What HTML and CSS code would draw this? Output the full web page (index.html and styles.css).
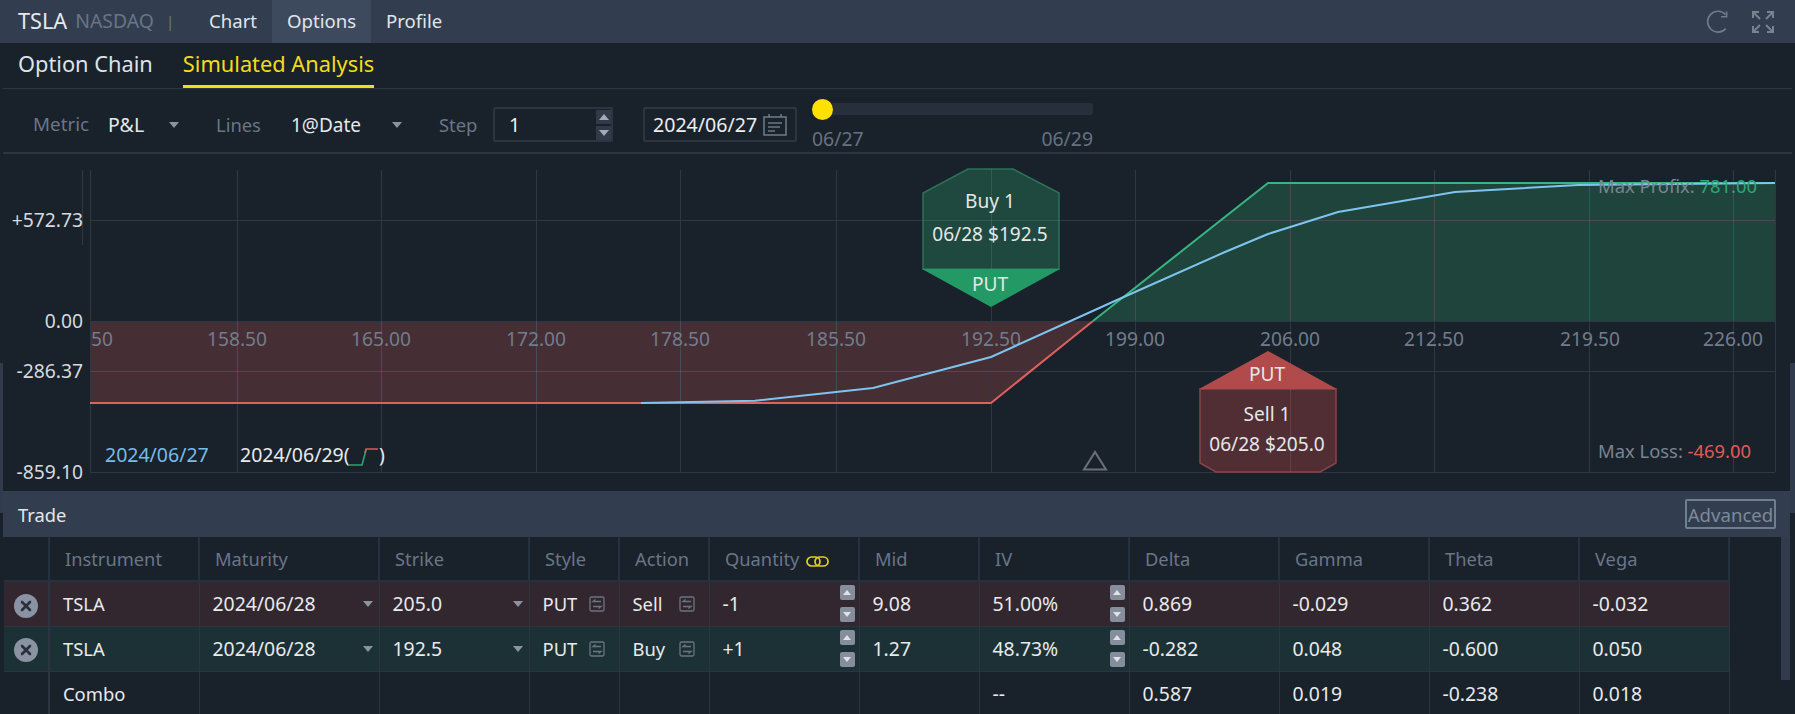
FILE: index.html
```html
<!DOCTYPE html>
<html lang="en">
<head>
<meta charset="utf-8">
<title>TSLA Options</title>
<link rel="stylesheet" href="styles.css">
</head>
<body>
<div class="page">
  <span class="edge edge-left"></span>
  <span class="edge edge-right"></span>

  <header class="topbar">
    <div class="brand"><span class="ticker">TSLA</span><span class="exchange">NASDAQ</span><span class="divider">|</span></div>
    <nav class="nav">
      <a class="nav-item">Chart</a>
      <a class="nav-item is-active">Options</a>
      <a class="nav-item">Profile</a>
    </nav>
    <div class="top-icons">
      <svg class="ico-refresh" width="24" height="24" viewBox="0 0 24 24"><path d="M20.6 4.6A10.4 10.4 0 1 0 20.8 18.6" fill="none" stroke="#6f7b8b" stroke-width="1.6"/><path d="M21.6 1.5V6.8H16" fill="none" stroke="#6f7b8b" stroke-width="1.6"/></svg>
      <svg class="ico-expand" width="24" height="24" viewBox="0 0 24 24" fill="none" stroke="#77838f" stroke-width="2"><path d="M2 8V2H8M2 2L9 9"/><path d="M16 2H22V8M22 2L15 9"/><path d="M2 16V22H8M2 22L9 15"/><path d="M16 22H22V16M22 22L15 15"/></svg>
    </div>
  </header>

  <div class="subtabs">
    <a class="subtab">Option Chain</a>
    <a class="subtab is-active">Simulated Analysis</a>
  </div>

  <div class="toolbar">
    <span class="lbl lbl-metric">Metric</span>
    <div class="sel sel-metric"><span>P&amp;L</span><i class="caret"></i></div>
    <span class="lbl lbl-lines">Lines</span>
    <div class="sel sel-lines"><span>1@Date</span><i class="caret"></i></div>
    <span class="lbl lbl-step">Step</span>
    <div class="box box-step"><span>1</span>
      <div class="step-spin"><i class="spin-up"></i><i class="spin-down"></i></div>
    </div>
    <div class="box box-date"><span>2024/06/27</span>
      <svg width="24" height="22" viewBox="0 0 24 22" fill="none" stroke="#6c7685" stroke-width="1.6"><rect x="1" y="3" width="22" height="18"/><path d="M6 0V3M18 0V3M5 9H19M5 13H17M5 17H12"/></svg>
    </div>
    <div class="slider">
      <div class="track"><span class="thumb"></span></div>
      <div class="slider-labels"><span>06/27</span><span>06/29</span></div>
    </div>
  </div>

  <section class="chart">
    <svg class="plot" width="1795" height="337" viewBox="0 154 1795 337">
      <!-- areas -->
      <polygon points="90,321 1093,321 991,403 90,403" fill="#452e34"/>
      <polygon points="1093,321 1268,183 1775,183 1775,321" fill="#1f443b"/>
      <!-- grid -->
      <g stroke="#2e3845" stroke-width="1" class="grid">
        <path d="M82.5 170V245M90.5 170V472M237.5 170V472M381.5 170V472M536.5 170V472M680.5 170V472M836.5 170V472M991.5 170V472M1135.5 170V472M1290.5 170V472M1434.5 170V472M1589.5 170V472M1733.5 170V472M1775.5 170V472"/>
        <path d="M90 220.5H1775M90 321.5H1775M90 371.5H1775M90 472.5H1775"/>
      </g>
      <g stroke="#ffffff" stroke-opacity=".1">
        <path d="M237.5 321V403M381.5 321V403M536.5 321V403M680.5 321V403M836.5 321V403M1290.5 183V321M1434.5 183V321M1589.5 183V321M1733.5 183V321M1135.5 288V321M1221 220.5H1775M90 371.5H1031"/>
      </g>
      <!-- y axis -->
      <g class="axis-y" text-anchor="end">
        <text x="83" y="227">+572.73</text>
        <text x="83" y="328">0.00</text>
        <text x="83" y="378">-286.37</text>
        <text x="83" y="479">-859.10</text>
      </g>
      <!-- x axis -->
      <g class="axis-x" text-anchor="middle">
        <text x="91" y="346" class="clip-left">50</text>
        <text x="237" y="346">158.50</text>
        <text x="381" y="346">165.00</text>
        <text x="536" y="346">172.00</text>
        <text x="680" y="346">178.50</text>
        <text x="836" y="346">185.50</text>
        <text x="991" y="346">192.50</text>
        <text x="1135" y="346">199.00</text>
        <text x="1290" y="346">206.00</text>
        <text x="1434" y="346">212.50</text>
        <text x="1590" y="346">219.50</text>
        <text x="1733" y="346">226.00</text>
      </g>
      <!-- payoff -->
      <path d="M90 403H991L1093 321" fill="none" stroke="#e0605f" stroke-width="2"/>
      <path d="M1093 321L1268 183H1775" fill="none" stroke="#35b57f" stroke-width="2"/>
      <path d="M641 403L755 400.7L873 388L991 357L1117 300L1225 252L1268 234L1338 212L1455 192L1578 185L1775 183" fill="none" stroke="#7fc4ee" stroke-width="2"/>
      <!-- buy badge -->
      <polygon points="968,169 1013,169 1059,193 1059,269 923,269 923,193" fill="#1f4b40" fill-opacity=".96" stroke="#2b7259" stroke-width="1.5"/>
      <path d="M991.5 169V269M923 220.5H1059" stroke="#ffffff" stroke-opacity=".09"/>
      <polygon points="922,269 1060,269 991,307" fill="#239966"/>
      <g class="badge" text-anchor="middle">
        <text x="990" y="208">Buy 1</text>
        <text x="990" y="241">06/28 $192.5</text>
        <text x="990" y="291">PUT</text>
      </g>
      <!-- sell badge -->
      <polygon points="1200,389 1336,389 1336,463 1320,472 1216,472 1200,463" fill="#502e34" stroke="#8a4448" stroke-width="1.5"/>
      <path d="M1290.5 389V472" stroke="#ffffff" stroke-opacity=".09"/>
      <polygon points="1199,389 1337,389 1268,351" fill="#b14b4b"/>
      <g class="badge" text-anchor="middle">
        <text x="1267" y="381">PUT</text>
        <text x="1267" y="421">Sell 1</text>
        <text x="1267" y="451">06/28 $205.0</text>
      </g>
      <!-- price marker -->
      <polygon points="1095,452 1084,469.5 1106,469.5" fill="none" stroke="#6a7079" stroke-width="2"/>
      <!-- legend -->
      <g class="legend">
        <text x="105" y="462" class="lg-blue">2024/06/27</text>
        <text x="240" y="462">2024/06/29(</text>
        <path d="M349 465H362L366 450" fill="none" stroke="#2aa56f" stroke-width="1.6"/>
        <path d="M365 453L366 449H378" fill="none" stroke="#d9585a" stroke-width="1.6"/>
        <text x="379" y="462">)</text>
      </g>
      <!-- extremes -->
      <text class="extreme" x="1598" y="193">Max Profix: <tspan class="ex-green">781.00</tspan></text>
      <text class="extreme" x="1598" y="458">Max Loss: <tspan class="ex-red">-469.00</tspan></text>
    </svg>
  </section>

  <section class="trade">
    <div class="trade-head">
      <span class="trade-title">Trade</span>
      <button class="advanced">Advanced</button>
    </div>
    <div class="trade-body">
      <table class="legs">
        <colgroup>
          <col class="c-x"><col class="c-150"><col class="c-180"><col class="c-150"><col class="c-90"><col class="c-90"><col class="c-150"><col class="c-120"><col class="c-150"><col class="c-150"><col class="c-150"><col class="c-150"><col class="c-150">
        </colgroup>
        <thead>
          <tr><th></th><th>Instrument</th><th>Maturity</th><th>Strike</th><th>Style</th><th>Action</th>
            <th>Quantity<svg class="chain-ico" width="23" height="11" viewBox="0 0 23 11" fill="none" stroke="#e6cf1e" stroke-width="1.7"><rect x="1" y="1" width="13" height="9" rx="4.5"/><rect x="9" y="1" width="13" height="9" rx="4.5"/></svg></th>
            <th>Mid</th><th>IV</th><th>Delta</th><th>Gamma</th><th>Theta</th><th>Vega</th></tr>
        </thead>
        <tbody>
          <tr class="row-sell">
            <td class="c-close"><span class="close-btn"><svg width="12" height="12" viewBox="0 0 12 12"><path d="M2 2L10 10M10 2L2 10" stroke="#2a303a" stroke-width="2.6" stroke-linecap="round"/></svg></span></td>
            <td class="txt">TSLA</td>
            <td><div class="cell-flex"><span>2024/06/28</span><i class="caret"></i></div></td>
            <td><div class="cell-flex"><span>205.0</span><i class="caret"></i></div></td>
            <td class="txt"><div class="cell-toggle"><span>PUT</span><svg class="swap" width="16" height="16" viewBox="0 0 16 16" fill="none" stroke="#6b7480" stroke-width="1.3"><rect x="1" y="1" width="14" height="14" rx="1.5"/><path d="M12 5.5H4L6.5 3.5M4 10.5H12L9.5 12.5"/></svg></div></td>
            <td class="txt"><div class="cell-toggle"><span>Sell</span><svg class="swap" width="16" height="16" viewBox="0 0 16 16" fill="none" stroke="#6b7480" stroke-width="1.3"><rect x="1" y="1" width="14" height="14" rx="1.5"/><path d="M12 5.5H4L6.5 3.5M4 10.5H12L9.5 12.5"/></svg></div></td>
            <td><div class="cell-spin"><span>-1</span><div class="spin"><i class="s-up"></i><i class="s-down"></i></div></div></td>
            <td>9.08</td>
            <td><div class="cell-spin"><span>51.00%</span><div class="spin"><i class="s-up"></i><i class="s-down"></i></div></div></td>
            <td>0.869</td><td>-0.029</td><td>0.362</td><td>-0.032</td>
          </tr>
          <tr class="row-buy">
            <td class="c-close"><span class="close-btn"><svg width="12" height="12" viewBox="0 0 12 12"><path d="M2 2L10 10M10 2L2 10" stroke="#2a303a" stroke-width="2.6" stroke-linecap="round"/></svg></span></td>
            <td class="txt">TSLA</td>
            <td><div class="cell-flex"><span>2024/06/28</span><i class="caret"></i></div></td>
            <td><div class="cell-flex"><span>192.5</span><i class="caret"></i></div></td>
            <td class="txt"><div class="cell-toggle"><span>PUT</span><svg class="swap" width="16" height="16" viewBox="0 0 16 16" fill="none" stroke="#6b7480" stroke-width="1.3"><rect x="1" y="1" width="14" height="14" rx="1.5"/><path d="M12 5.5H4L6.5 3.5M4 10.5H12L9.5 12.5"/></svg></div></td>
            <td class="txt"><div class="cell-toggle"><span>Buy</span><svg class="swap" width="16" height="16" viewBox="0 0 16 16" fill="none" stroke="#6b7480" stroke-width="1.3"><rect x="1" y="1" width="14" height="14" rx="1.5"/><path d="M12 5.5H4L6.5 3.5M4 10.5H12L9.5 12.5"/></svg></div></td>
            <td><div class="cell-spin"><span>+1</span><div class="spin"><i class="s-up"></i><i class="s-down"></i></div></div></td>
            <td>1.27</td>
            <td><div class="cell-spin"><span>48.73%</span><div class="spin"><i class="s-up"></i><i class="s-down"></i></div></div></td>
            <td>-0.282</td><td>0.048</td><td>-0.600</td><td>0.050</td>
          </tr>
          <tr>
            <td></td><td class="txt">Combo</td><td></td><td></td><td></td><td></td><td></td><td></td>
            <td>--</td><td>0.587</td><td>0.019</td><td>-0.238</td><td>0.018</td>
          </tr>
        </tbody>
      </table>
      <div class="rail"></div>
    </div>
  </section>
</div>
</body>
</html>
```
FILE: styles.css
```css
* { box-sizing: border-box; }
html, body { margin: 0; padding: 0; background: #19212b; }
body { font-family: "Noto Sans", "Liberation Sans", sans-serif; color: #e8eaec; }
.page { position: relative; width: 1795px; height: 714px; overflow: hidden; background: #19212b; }

.edge { position: absolute; top: 363px; height: 150px; background: #303c4d; }
.edge-left { left: 0; width: 3px; }
.edge-right { right: 0; width: 5px; }

.topbar { display: flex; align-items: stretch; height: 43px; background: #323e4f; }
.brand { display: flex; align-items: center; width: 209px; padding: 0 0 2px 18px; }
.ticker { font-size: 21.7px; color: #e6e9ec; }
.exchange { font-size: 19.4px; color: #687585; margin-left: 8px; }
.divider { font-size: 15px; color: #687585; margin-left: 12px; }
.nav { display: flex; }
.nav-item { display: flex; align-items: center; font-size: 18.6px; color: #e2e5e8; width: 63px; padding-bottom: 2px; }
.nav-item.is-active { width: 99px; padding-left: 15px; background: #3d4a5d; }
.nav-item:last-child { margin-left: 15px; }
.top-icons { margin-left: auto; display: flex; align-items: center; gap: 22px; padding-right: 20px; }

.subtabs { display: flex; height: 46px; margin: 0 3px; padding-left: 15px; gap: 30px; border-bottom: 1px solid #2c3742; }
.subtab { display: flex; align-items: center; height: 45px; font-size: 21.8px; color: #dde3e8; padding-bottom: 4px; }
.subtab.is-active { color: #f4dc1b; border-bottom: 3px solid #f4dc1b; padding-bottom: 1px; }

.toolbar { display: flex; align-items: flex-start; height: 65px; margin: 0 3px; padding: 18px 0 0 30px; border-bottom: 2px solid #2c3540; font-size: 19px; }
.lbl { color: #6a7686; line-height: 35px; font-size: 18.4px; }
.lbl-metric { width: 75px; font-size: 18.8px; }
.lbl-lines { width: 75px; }
.lbl-step { width: 54px; }
.sel { display: flex; align-items: center; justify-content: space-between; height: 35px; color: #e4e7ea; margin-right: 37px; }
.sel-metric { width: 71px; font-size: 19.5px; }
.sel-lines { width: 111px; }
.caret { display: inline-block; width: 0; height: 0; border-left: 5px solid transparent; border-right: 5px solid transparent; border-top: 6px solid #8b93a1; }
.box { display: flex; align-items: center; height: 35px; border: 2px solid #2c3643; border-radius: 2px; color: #eceef0; font-size: 19.6px; }
.box-step { width: 120px; padding-left: 14px; justify-content: space-between; margin-right: 30px; }
.step-spin { display: flex; flex-direction: column; gap: 2px; }
.spin-up, .spin-down { display: flex; align-items: center; justify-content: center; width: 15px; height: 14px; background: #303a49; }
.spin-up::after { content: ""; border-left: 5px solid transparent; border-right: 5px solid transparent; border-bottom: 6px solid #a4abb7; }
.spin-down::after { content: ""; border-left: 5px solid transparent; border-right: 5px solid transparent; border-top: 6px solid #a4abb7; }
.box-date { width: 154px; padding-left: 8px; gap: 6px; margin-right: 15px; }
.slider { width: 281px; margin-top: -4px; }
.track { position: relative; height: 12px; background: #262f3b; border-radius: 3px; }
.thumb { position: absolute; left: 0; top: -4px; width: 21px; height: 21px; border-radius: 50%; background: #ffe100; }
.slider-labels { display: flex; justify-content: space-between; margin-top: 12px; color: #667281; line-height: 24px; font-size: 19.4px; }

.chart { height: 337px; }
.plot { display: block; font-family: "Noto Sans", "Liberation Sans", sans-serif; font-size: 19.2px; }
.axis-y text { fill: #d6dade; font-size: 19.3px; }
.axis-x text { fill: #727d8b; }
.axis-x .clip-left { text-anchor: start; }
.badge text { fill: #e4e8e8; font-size: 19.1px; }
.legend text { fill: #e8eaec; font-size: 19.5px; }
.legend .lg-blue { fill: #76bce8; }
.extreme { fill: #7a8592; font-size: 18.4px; }
.ex-green { fill: #2ea776; }
.ex-red { fill: #e25b5b; }

.trade { margin: 0 5px 0 3px; }
.trade-head { display: flex; align-items: center; justify-content: space-between; height: 46px; padding: 0 14px 0 15px; background: #323e4f; }
.trade-title { font-size: 18.3px; color: #e4e7ea; }
.advanced { width: 91px; height: 30px; padding: 0; background: transparent; border: 2px solid #6f7f92; border-radius: 2px; color: #7d8a9b; font: 18.6px "Noto Sans", sans-serif; }
.trade-body { display: flex; justify-content: space-between; align-items: flex-start; }
.rail { width: 9px; height: 143px; background: #303c4d; }

.legs { table-layout: fixed; width: 1725px; margin-left: 1px; border-collapse: collapse; font-size: 19.4px; }
.c-x { width: 45px; } .c-90 { width: 90px; } .c-120 { width: 120px; } .c-150 { width: 150px; } .c-180 { width: 180px; }
.legs th { height: 44px; padding: 0 0 0 15px; text-align: left; font-weight: 400; font-size: 18.3px; color: #697687; background: #19212b; border: 2px solid #263140; border-top: 0; border-left: 0; white-space: nowrap; }
.legs td { height: 45px; padding: 0 0 0 13px; border-right: 1px solid #2c3441; border-bottom: 1px solid #2c3441; color: #e8eaec; white-space: nowrap; }
.legs td.txt { font-size: 18.4px; }
.legs td:first-child { border-right-width: 2px; padding: 0; }
.row-sell td { background: #32272f; }
.row-buy td { background: #1c3135; }
.c-close { text-align: center; }
.close-btn { display: inline-flex; align-items: center; justify-content: center; width: 24px; height: 24px; border-radius: 50%; background: #8a93a3; vertical-align: middle; }
.cell-flex { display: flex; align-items: center; justify-content: space-between; padding-right: 6px; }
.cell-toggle { display: flex; align-items: center; justify-content: space-between; padding-right: 14px; }
.cell-spin { display: flex; align-items: center; justify-content: space-between; padding-right: 4px; }
.spin { display: flex; flex-direction: column; gap: 7px; }
.s-up, .s-down { display: flex; align-items: center; justify-content: center; width: 15px; height: 15px; background: #868d9d; border-radius: 2px; }
.s-up::after { content: ""; border-left: 4px solid transparent; border-right: 4px solid transparent; border-bottom: 5px solid #dfe2e6; }
.s-down::after { content: ""; border-left: 4px solid transparent; border-right: 4px solid transparent; border-top: 5px solid #dfe2e6; }
.chain-ico { margin-left: 7px; vertical-align: -1px; }
```
